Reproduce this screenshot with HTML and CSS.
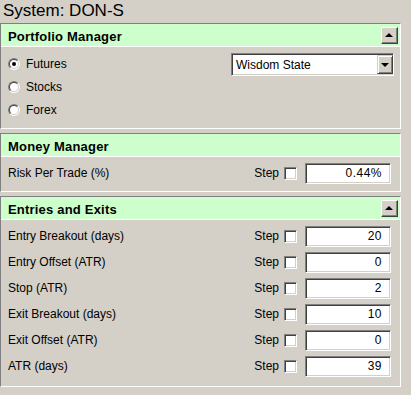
FILE: index.html
```html
<!DOCTYPE html>
<html>
<head>
<meta charset="utf-8">
<link rel="stylesheet" href="styles.css">
</head>
<body>
<div class="page">
  <div class="title">System: DON-S</div>

  <div class="panel">
    <div class="header">
      <span class="htext">Portfolio Manager</span>
      <span class="collapse"><span class="up"></span></span>
    </div>
    <div class="body body-pm">
      <div class="radios">
        <div class="radio-row"><span class="radio"><span class="radio-in checked"></span></span><span>Futures</span></div>
        <div class="radio-row"><span class="radio"><span class="radio-in"></span></span><span>Stocks</span></div>
        <div class="radio-row"><span class="radio"><span class="radio-in"></span></span><span>Forex</span></div>
      </div>
      <div class="combo">
        <span class="combo-text">Wisdom State</span>
        <span class="combo-btn"><span class="down"></span></span>
      </div>
    </div>
  </div>

  <div class="panel">
    <div class="header">
      <span class="htext">Money Manager</span>
    </div>
    <div class="body body-rows">
      <div class="row"><span class="label">Risk Per Trade (%)</span><span class="step">Step</span><span class="check"></span><span class="field">0.44%</span></div>
    </div>
  </div>

  <div class="panel">
    <div class="header">
      <span class="htext">Entries and Exits</span>
      <span class="collapse"><span class="up"></span></span>
    </div>
    <div class="body body-rows body-last">
      <div class="row"><span class="label">Entry Breakout (days)</span><span class="step">Step</span><span class="check"></span><span class="field">20</span></div>
      <div class="row"><span class="label">Entry Offset (ATR)</span><span class="step">Step</span><span class="check"></span><span class="field">0</span></div>
      <div class="row"><span class="label">Stop (ATR)</span><span class="step">Step</span><span class="check"></span><span class="field">2</span></div>
      <div class="row"><span class="label">Exit Breakout (days)</span><span class="step">Step</span><span class="check"></span><span class="field">10</span></div>
      <div class="row"><span class="label">Exit Offset (ATR)</span><span class="step">Step</span><span class="check"></span><span class="field">0</span></div>
      <div class="row"><span class="label">ATR (days)</span><span class="step">Step</span><span class="check"></span><span class="field">39</span></div>
    </div>
  </div>
</div>
</body>
</html>
```
FILE: styles.css
```css
html, body {
  margin: 0;
  padding: 0;
  background: #d4d0c8;
}
body {
  font-family: "Liberation Sans", Arial, sans-serif;
  font-size: 12px;
  color: #000;
}
.page {
  width: 401px;
}
.title {
  height: 23px;
  line-height: 21px;
  font-size: 17px;
  padding-left: 3px;
  white-space: nowrap;
}
.panel {
  border-top: 1px solid #808080;
  border-left: 1px solid #808080;
  border-right: 1px solid #ffffff;
  border-bottom: 1px solid #ffffff;
  margin-bottom: 4px;
}
.header {
  background: #ccffcc;
  height: 22px;
  border-bottom: 1px solid #ffffff;
  display: flex;
  align-items: center;
  justify-content: space-between;
  padding-left: 7px;
  padding-right: 2px;
}
.htext {
  font-weight: bold;
  font-size: 13px;
  letter-spacing: 0.2px;
  padding-top: 2px;
}
.collapse {
  width: 15px;
  height: 15px;
  box-sizing: content-box;
  background: #d4d0c8;
  border-top: 1px solid #ffffff;
  border-left: 1px solid #ffffff;
  border-right: 1px solid #404040;
  border-bottom: 1px solid #404040;
  box-shadow: inset -1px -1px 0 #808080;
  display: flex;
  align-items: center;
  justify-content: center;
}
.up {
  width: 0;
  height: 0;
  border-left: 4px solid transparent;
  border-right: 4px solid transparent;
  border-bottom: 4px solid #000;
  margin-right: 1px;
}
.down {
  width: 0;
  height: 0;
  border-left: 4px solid transparent;
  border-right: 4px solid transparent;
  border-top: 4px solid #000;
}
.body-pm {
  display: flex;
  justify-content: space-between;
  align-items: flex-start;
  padding: 5px 6px 7px 7px;
}
.radios {
  display: flex;
  flex-direction: column;
}
.radio-row {
  height: 23px;
  display: flex;
  align-items: center;
  gap: 6px;
}
.radio {
  width: 10px;
  height: 10px;
  border-radius: 50%;
  border-top: 1px solid #808080;
  border-left: 1px solid #808080;
  border-right: 1px solid #ffffff;
  border-bottom: 1px solid #ffffff;
  display: flex;
}
.radio-in {
  width: 8px;
  height: 8px;
  border-radius: 50%;
  background: #fff;
  border-top: 1px solid #404040;
  border-left: 1px solid #404040;
  border-right: 1px solid #d4d0c8;
  border-bottom: 1px solid #d4d0c8;
  display: flex;
  align-items: center;
  justify-content: center;
}
.radio-in.checked::after {
  content: "";
  width: 4px;
  height: 4px;
  border-radius: 50%;
  background: #000;
}
.combo {
  width: 159px;
  height: 19px;
  margin-top: 1px;
  background: #fff;
  border-top: 1px solid #808080;
  border-left: 1px solid #808080;
  border-right: 1px solid #ffffff;
  border-bottom: 1px solid #ffffff;
  box-shadow: inset 1px 1px 0 #404040, inset -1px -1px 0 #d4d0c8;
  padding: 1px;
  display: flex;
  align-items: center;
  justify-content: space-between;
}
.combo-text {
  padding-left: 3px;
}
.combo-btn {
  width: 14px;
  height: 17px;
  box-sizing: content-box;
  background: #d4d0c8;
  border-top: 1px solid #d4d0c8;
  border-left: 1px solid #d4d0c8;
  border-right: 1px solid #404040;
  border-bottom: 1px solid #404040;
  box-shadow: inset 1px 1px 0 #ffffff, inset -1px -1px 0 #808080;
  display: flex;
  align-items: center;
  justify-content: center;
  margin-right: -1px;
}
.body-rows {
  padding: 3px 9px 5px 7px;
}
.body-last {
  padding-bottom: 7px;
}
.row {
  height: 26px;
  display: flex;
  align-items: center;
}
.label {
  flex: 1;
}
.step {
  margin-right: 5px;
}
.check {
  width: 9px;
  height: 9px;
  background: #fff;
  border-top: 1px solid #808080;
  border-left: 1px solid #808080;
  border-right: 1px solid #ffffff;
  border-bottom: 1px solid #ffffff;
  box-shadow: inset 1px 1px 0 #404040, inset -1px -1px 0 #d4d0c8;
  padding: 1px;
  margin-right: 8px;
}
.field {
  width: 86px;
  height: 21px;
  box-sizing: border-box;
  background: #fff;
  border-top: 1px solid #808080;
  border-left: 1px solid #808080;
  border-right: 1px solid #ffffff;
  border-bottom: 1px solid #ffffff;
  box-shadow: inset 1px 1px 0 #404040, inset -1px -1px 0 #d4d0c8;
  text-align: right;
  padding-right: 8px;
  line-height: 19px;
  letter-spacing: 0.5px;
}
```
